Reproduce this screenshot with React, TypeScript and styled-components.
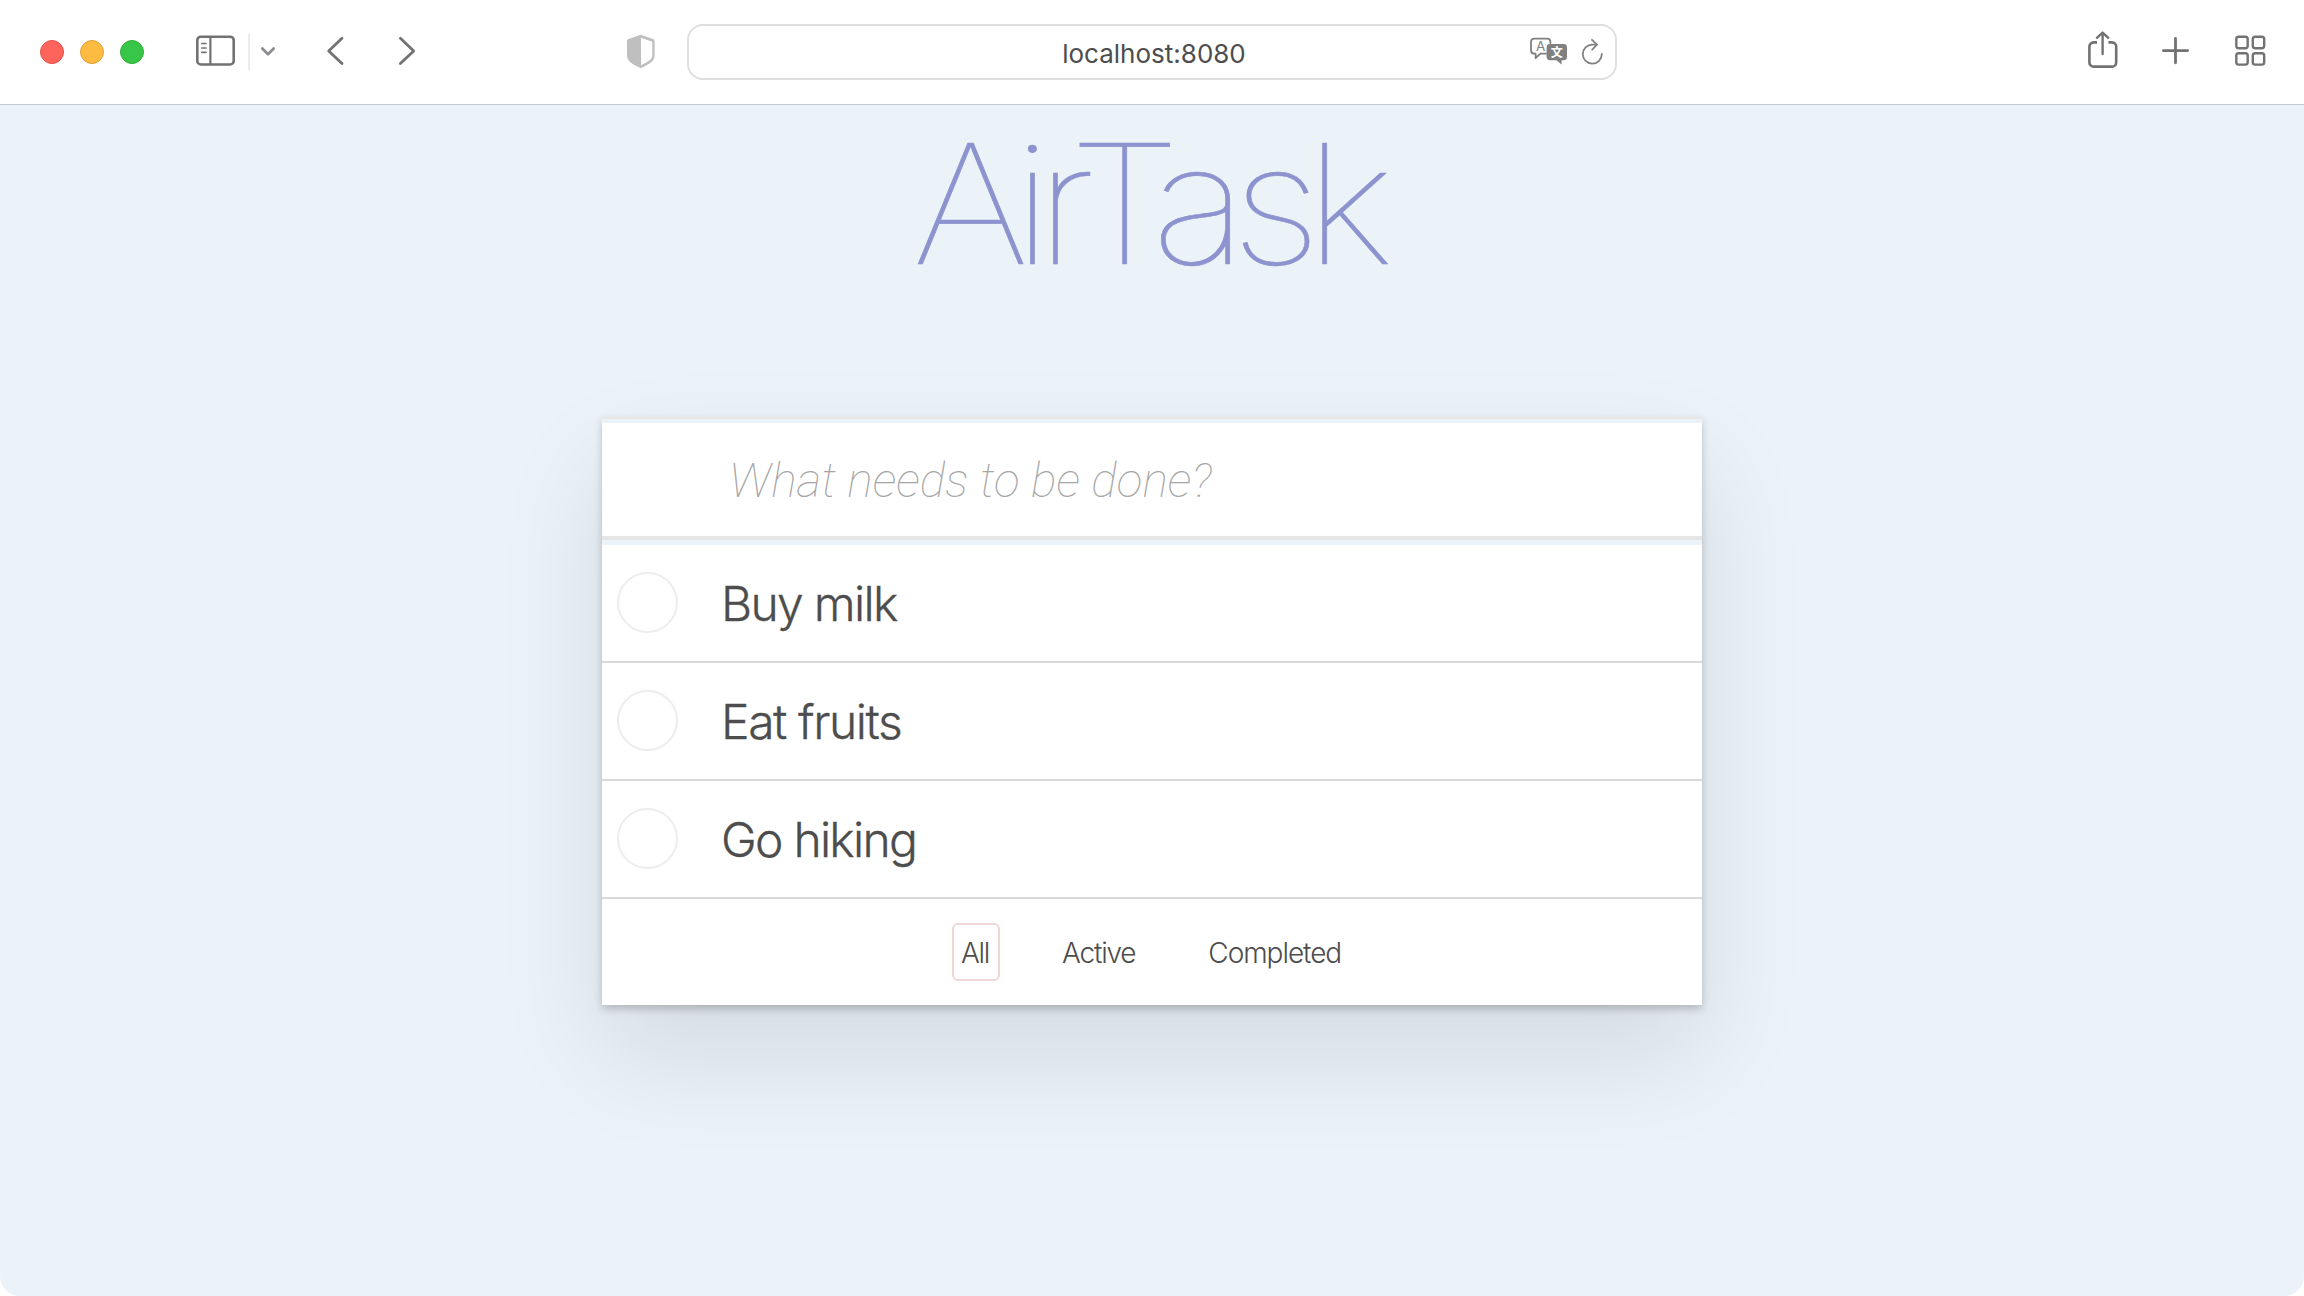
import React from 'react';
import styled, { createGlobalStyle } from 'styled-components';

const GlobalStyle = createGlobalStyle`
  * { box-sizing: border-box; }
  body { margin: 0; background: #fff; }
`;

const sans = '"Inter", "Liberation Sans", sans-serif';
const ink = '#4d4d4d';

const Window = styled.div`
  display: flex;
  flex-direction: column;
  width: 2304px;
  height: 1296px;
  overflow: hidden;
  border-radius: 0 0 20px 20px;
  background: #ebf3f9;
  font-family: ${sans};
  color: ${ink};
`;

const Toolbar = styled.header`
  display: flex;
  align-items: center;
  flex: none;
  height: 105px;
  padding: 0 36px 0 40px;
  background: #fff;
  border-bottom: 1px solid #c3cdd1;
`;

const Lights = styled.div`
  display: flex;
  gap: 16px;
`;

const Light = styled.span<{ $fill: string; $edge: string }>`
  width: 24px;
  height: 24px;
  border-radius: 50%;
  background: ${(p) => p.$fill};
  border: 1px solid ${(p) => p.$edge};
`;

const Icon = styled.svg<{ $before?: number; $tone?: string }>`
  display: block;
  flex: none;
  margin-left: ${(p) => p.$before ?? 0}px;
  fill: none;
  stroke: ${(p) => p.$tone ?? '#727272'};
  stroke-width: 2.6;
  stroke-linecap: round;
  stroke-linejoin: round;
`;

const Divider = styled.span`
  width: 2px;
  height: 36px;
  margin-left: 8px;
  background: #ebebeb;
`;

const Address = styled.div`
  display: grid;
  grid-template-columns: 1fr auto 1fr;
  align-items: center;
  width: 930px;
  height: 56px;
  margin-left: 29px;
  padding: 0 9px 0 12px;
  border: 2px solid #dfdfdf;
  border-radius: 16px;
`;

const Url = styled.span`
  grid-column: 2;
  padding: 4px 0 0 1px;
  font-size: 26px;
  line-height: 32px;
`;

const AddressTools = styled.div`
  display: flex;
  justify-content: flex-end;
`;

const RightTools = styled.div`
  display: flex;
  margin-left: auto;
`;

const Page = styled.main`
  display: flex;
  flex-direction: column;
  align-items: center;
`;

const Title = styled.h1`
  margin: 0 0 115px;
  padding-right: 13px;
  height: 197px;
  font-size: 166px;
  font-weight: 100;
  line-height: 197px;
  letter-spacing: -14.8px;
  color: #8c93ce;
  -webkit-text-stroke: 0.6px #8c93ce;
  transform: scaleX(1.1);
`;

const Card = styled.section`
  width: 1100px;
  background: #fff;
  box-shadow: 0 4px 8px rgba(0, 0, 0, 0.2), 0 50px 100px rgba(0, 0, 0, 0.1);
`;

const Entry = styled.div`
  padding-top: 4px;
  border-top: 2px solid #e6e6e6;
  border-bottom: 5px solid #ebf3fa;
  background: #ebf3fa;
`;

const Input = styled.input`
  display: block;
  width: 100%;
  height: 117px;
  padding: 2px 32px 4px 127px;
  border: 0;
  outline: 0;
  background: #fff;
  box-shadow: inset 0 -4px 1px #e5e5e5;
  font: italic 100 48px "Roboto", sans-serif;
  color: ${ink};

  &::placeholder {
    color: #a6a6a6;
    opacity: 1;
  }
`;

const List = styled.ul`
  margin: 0;
  padding: 0;
  list-style: none;
`;

const Task = styled.li`
  display: flex;
  align-items: center;
  height: 118px;
  padding-left: 15px;
  border-bottom: 2px solid #d9d9d9;
`;

const Check = styled.span`
  width: 61px;
  height: 61px;
  margin: -1px 0 0;
  border: 2px solid #ededed;
  border-radius: 50%;
`;

const Label = styled.label<{ $tracking: number }>`
  margin-left: 43px;
  padding-top: 2px;
  font-size: 48px;
  font-weight: 300;
  line-height: 58px;
  letter-spacing: ${(p) => p.$tracking}px;
  -webkit-text-stroke: 0.3px ${ink};
`;

const Filters = styled.footer`
  display: flex;
  align-items: center;
  height: 106px;
  padding-left: 350px;
`;

const Filter = styled.a<{ $active?: boolean; $tracking: number; $before?: number }>`
  height: 58px;
  margin-left: ${(p) => p.$before ?? 0}px;
  padding: 1px 9px 0 7px;
  border: 2px solid ${(p) => (p.$active ? '#f0d6d7' : 'transparent')};
  border-radius: 6px;
  font-size: 28px;
  font-weight: 300;
  line-height: 54px;
  letter-spacing: ${(p) => p.$tracking}px;
`;

const tasks = [
  { text: 'Buy milk', tracking: -1.7 },
  { text: 'Eat fruits', tracking: -1.43 },
  { text: 'Go hiking', tracking: -1.75 },
];

export default function App() {
  return (
    <>
      <GlobalStyle />
      <Window>
        <Toolbar>
          <Lights>
            <Light $fill="#fe635c" $edge="#e1504a" />
            <Light $fill="#fdbb42" $edge="#e0a03a" />
            <Light $fill="#38c648" $edge="#2fae3c" />
          </Lights>
          <Icon $before={48} width="48" height="44">
            <rect x="5.3" y="6.7" width="36.4" height="27.8" rx="3.6" />
            <path d="M18.4 7V34" strokeWidth="2.2" />
            <path d="M9.8 13.5h4.2M9.8 18h4.2M9.8 22.3h4.2" strokeWidth="1.7" />
          </Icon>
          <Divider />
          <Icon $before={8} width="20" height="44">
            <path d="M4.3 18.6L10 24.2L15.7 18.6" stroke="#8e8d93" strokeWidth="2.8" />
          </Icon>
          <Icon $before={44} width="26" height="44">
            <path d="M20 8.2L6.7 21L20 33.6" strokeWidth="2.8" />
          </Icon>
          <Icon $before={46} width="26" height="44">
            <path d="M6.4 8.2L19.7 21L6.4 33.6" strokeWidth="2.8" />
          </Icon>
          <Icon $before={204} width="34" height="44">
            <path
              d="M15.8 5Q16.7 4.6 17.6 5L28.9 9Q30.6 9.6 30.6 11.2V25.5C30.6 32 23.5 34.8 17.6 37.8Q16.7 38.2 15.8 37.8C10 34.8 3 32 3 25.5V11.2Q3 9.6 4.7 9Z"
              fill="#bfbfbf"
              stroke="none"
            />
            <path d="M17 7.7L28.3 11.7V25.5C28.3 30 22 32.6 17 35.3Z" fill="#fff" stroke="none" />
          </Icon>
          <Address>
            <Url>localhost:8080</Url>
            <AddressTools>
              <Icon $tone="#808080" width="44" height="44">
                <path
                  d="M24.4 13V12A3.4 3.4 0 0 0 21 8.7H8.4A3.4 3.4 0 0 0 5 12V20.4A3.4 3.4 0 0 0 8.4 23.7H9.6V28L14.4 23.7H20"
                  strokeWidth="1.8"
                />
                <text x="14.7" y="21.2" textAnchor="middle" fontSize="13.5" fontFamily="Inter, sans-serif" fill="#808080" stroke="none">A</text>
                <path d="M24 14H37.6A3.4 3.4 0 0 1 41 17.4V26.8A3.4 3.4 0 0 1 37.6 30.2H35.6V34.6L30.4 30.2H24A3.4 3.4 0 0 1 20.6 26.8V17.4A3.4 3.4 0 0 1 24 14Z" fill="#808080" stroke="none" />
                <text x="30.8" y="26.7" textAnchor="middle" fontSize="12" fontWeight="700" fontFamily="'Noto Sans CJK SC', sans-serif" fill="#fff" stroke="none">文</text>
              </Icon>
              <Icon $tone="#808080" $before={8} width="28" height="44">
                <path d="M23.8 24A9.5 9.5 0 1 1 14.3 14.6H18.6" strokeWidth="1.8" />
                <path d="M14 9.8L19 14.7L14.2 19.6" strokeWidth="1.8" />
              </Icon>
            </AddressTools>
          </Address>
          <RightTools>
            <Icon width="36" height="44">
              <path d="M13 12.4H9.6A4.2 4.2 0 0 0 5.4 16.6V32.4A4.2 4.2 0 0 0 9.6 36.6H28A4.2 4.2 0 0 0 32.2 32.4V16.6A4.2 4.2 0 0 0 28 12.4H24.4" strokeLinecap="butt" />
              <path d="M18.6 3V24M12.9 7.8L18.6 2.6L24.3 7.8" strokeWidth="2.4" />
            </Icon>
            <Icon $before={40} width="32" height="44">
              <path d="M3.4 20.6H27.6M15.5 8.4V32.8" strokeWidth="2.8" />
            </Icon>
            <Icon $before={40} width="36" height="44">
              <rect x="4.3" y="6.8" width="11.4" height="11.4" rx="2.4" strokeWidth="2.4" />
              <rect x="20.8" y="6.8" width="11.4" height="11.4" rx="2.4" strokeWidth="2.4" />
              <rect x="4.3" y="23.2" width="11.4" height="11.4" rx="2.4" strokeWidth="2.4" />
              <rect x="20.8" y="23.2" width="11.4" height="11.4" rx="2.4" strokeWidth="2.4" />
            </Icon>
          </RightTools>
        </Toolbar>
        <Page>
          <Title>AirTask</Title>
          <Card>
            <Entry>
              <Input placeholder="What needs to be done?" />
            </Entry>
            <List>
              {tasks.map((t) => (
                <Task key={t.text}>
                  <Check />
                  <Label $tracking={t.tracking}>{t.text}</Label>
                </Task>
              ))}
            </List>
            <Filters>
              <Filter $active $tracking={-1.3}>All</Filter>
              <Filter $before={53} $tracking={-1.2}>Active</Filter>
              <Filter $before={53} $tracking={-1.05}>Completed</Filter>
            </Filters>
          </Card>
        </Page>
      </Window>
    </>
  );
}
